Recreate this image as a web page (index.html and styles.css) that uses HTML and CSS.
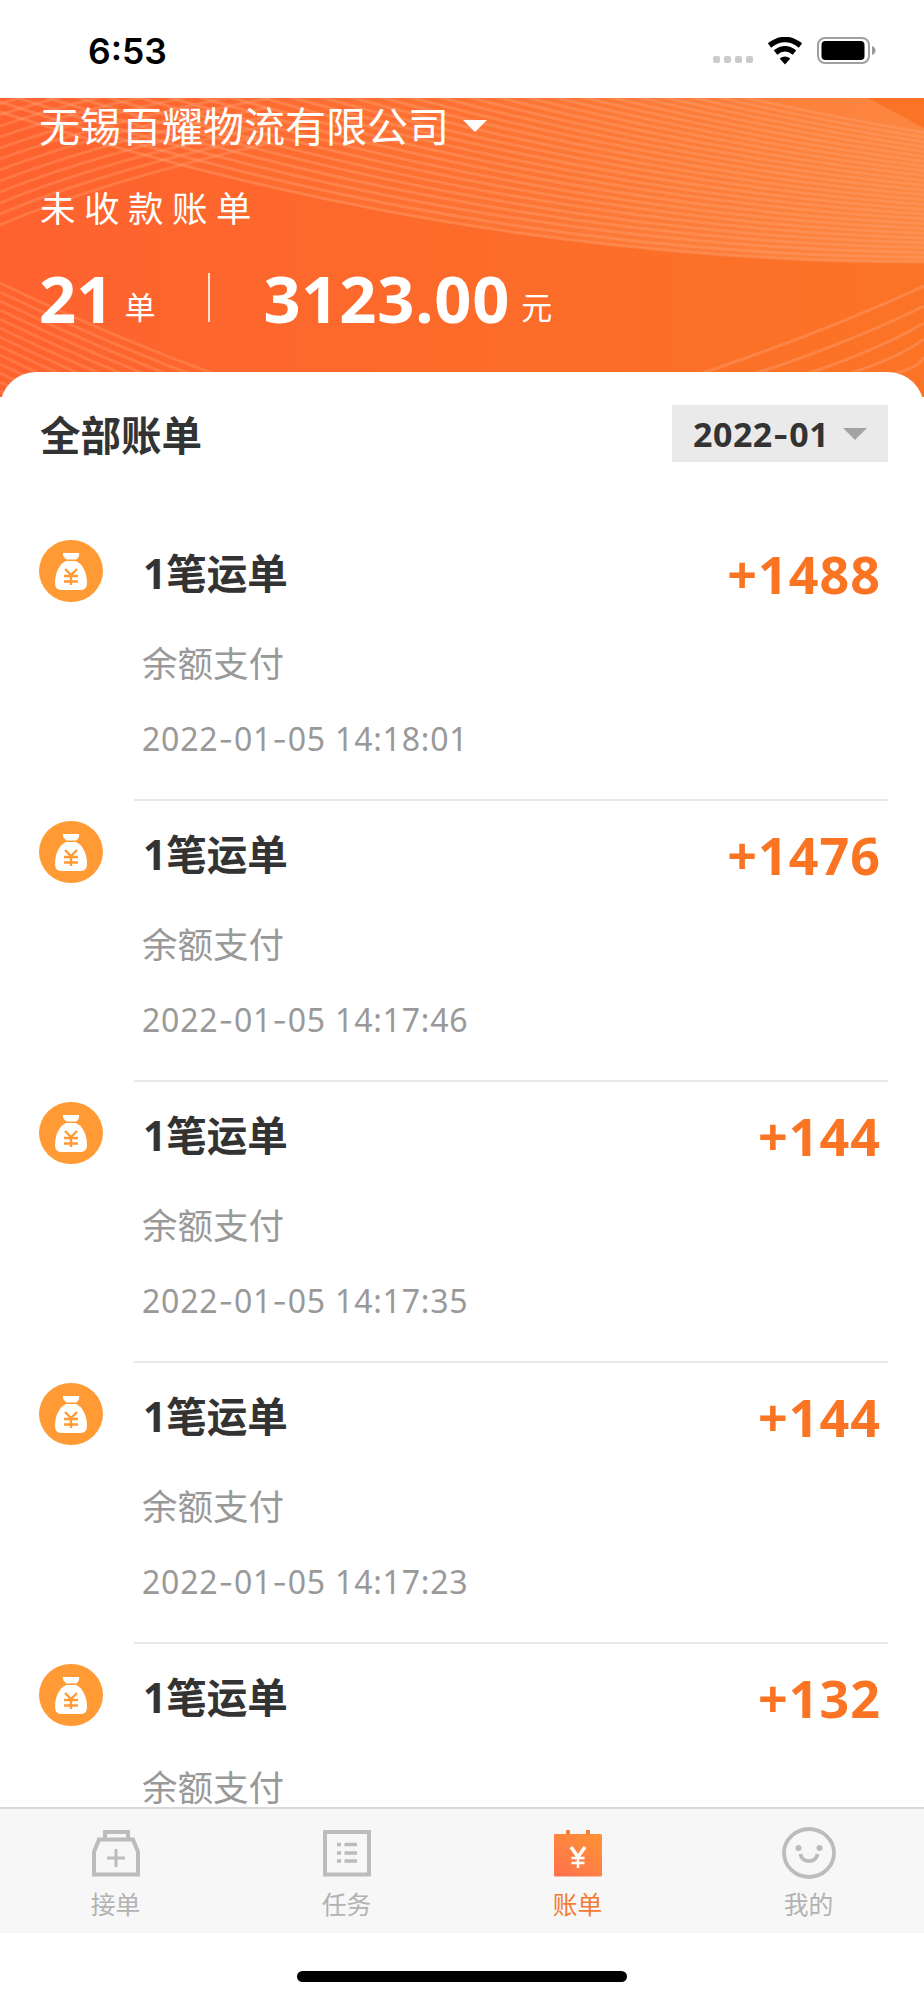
FILE: index.html
```html
<!DOCTYPE html>
<html lang="zh-CN">
<head>
<meta charset="utf-8">
<title>账单</title>
<link rel="stylesheet" href="styles.css">
</head>
<body>
<svg width="0" height="0" class="defs">
  <symbol id="bag" viewBox="0 0 64 62">
    <ellipse cx="32" cy="31" rx="32" ry="31" fill="#ff9a35"/>
    <path d="M24 13H40Q41 16 37.500 19.500H27.500Q23 16 24 13Z" fill="#fff"/>
    <path d="M27 21H37C44 24 48 33 48 43Q48 50 42 50H22Q16 50 16 43C16 33 20 24 27 21Z" fill="#fff"/>
    <path d="M26 29L32 35L38 29M25 36H39M25 41.500H39M32 35V45" fill="none" stroke="#ff9a35" stroke-width="2.400"/>
  </symbol>
</svg>
<div class="phone">
  <div class="status">
    <span class="clock">6:53</span>
    <svg class="status-icons" width="168" height="32" viewBox="0 0 168 32">
      <g fill="#cbcbcb"><rect x="1" y="19" width="7" height="7" rx="2"/><rect x="12" y="19" width="7" height="7" rx="2"/><rect x="23" y="19" width="7" height="7" rx="2"/><rect x="34" y="19" width="7" height="7" rx="2"/></g>
      <g fill="none" stroke="#000" stroke-width="5.500"><path d="M57.500 8.500Q73 -3.500 88.500 8.500"/><path d="M63.500 15.500Q73 8 82.500 15.500"/></g>
      <path d="M67.700 21.500Q73 17.500 78.300 21.500L73 27.500Z"/>
      <rect x="106" y="1" width="51" height="25" rx="7" fill="#fff" stroke="#a0a0a0" stroke-width="2"/>
      <rect x="109.500" y="4" width="43" height="19" rx="4"/>
      <path d="M160 9Q163.500 10.500 163.500 13.500T160 18Z" fill="#999"/>
    </svg>
  </div>

  <header class="hero">
    <svg class="waves" width="924" height="299" viewBox="0 0 924 299">
      <defs>
        <linearGradient id="fan" x1="0" x2="1" y1="0" y2="0"><stop offset="0" stop-color="#ffb27c" stop-opacity="0"/><stop offset=".5" stop-color="#ffb27c" stop-opacity=".1"/><stop offset="1" stop-color="#ffb27c" stop-opacity=".3"/></linearGradient>
      </defs>
      <path d="M0 14C250 95 560 164 924 164V30L868 0H0Z" fill="url(#fan)"/>
      <g id="lines" fill="none" stroke="#ffa070" stroke-opacity=".42" stroke-width="3"></g>
    </svg>
    <div class="company"><span>无锡百耀物流有限公司</span><i class="caret caret-white"></i></div>
    <div class="label">未收款账单</div>
    <div class="totals">
      <b class="count">21</b><span class="unit">单</span>
      <i class="bar"></i>
      <b class="sum">3123.00</b><span class="unit">元</span>
    </div>
  </header>

  <main class="sheet">
    <div class="sheet-head">
      <h2>全部账单</h2>
      <div class="month"><span>2022<span class="dash">-</span>01</span><i class="caret caret-gray"></i></div>
    </div>
    <div class="row"><svg class="bag"><use href="#bag"/></svg><div class="body"><div class="top"><span class="title">1笔运单</span><span class="amount">+1488</span></div><div class="sub">余额支付</div><div class="date">2022<span class="dash">-</span>01<span class="dash">-</span>05 14:18:01</div></div></div>
    <div class="row"><svg class="bag"><use href="#bag"/></svg><div class="body"><div class="top"><span class="title">1笔运单</span><span class="amount">+1476</span></div><div class="sub">余额支付</div><div class="date">2022<span class="dash">-</span>01<span class="dash">-</span>05 14:17:46</div></div></div>
    <div class="row"><svg class="bag"><use href="#bag"/></svg><div class="body"><div class="top"><span class="title">1笔运单</span><span class="amount">+144</span></div><div class="sub">余额支付</div><div class="date">2022<span class="dash">-</span>01<span class="dash">-</span>05 14:17:35</div></div></div>
    <div class="row"><svg class="bag"><use href="#bag"/></svg><div class="body"><div class="top"><span class="title">1笔运单</span><span class="amount">+144</span></div><div class="sub">余额支付</div><div class="date">2022<span class="dash">-</span>01<span class="dash">-</span>05 14:17:23</div></div></div>
    <div class="row last"><svg class="bag"><use href="#bag"/></svg><div class="body"><div class="top"><span class="title">1笔运单</span><span class="amount">+132</span></div><div class="sub">余额支付</div></div></div>
  </main>

  <nav class="tabs">
    <div class="tab">
      <svg width="56" height="56" viewBox="0 0 56 56" fill="none" stroke="#bcbcbc" stroke-width="4"><path d="M6 48.500V26L11 13.500H45L50 26V48.500Z"/><path d="M17 13V6H40V13"/><path d="M28 23V41M19 32H37" stroke-width="3"/></svg>
      <span>接单</span>
    </div>
    <div class="tab">
      <svg width="56" height="56" viewBox="0 0 56 56" fill="none" stroke="#bcbcbc" stroke-width="4"><rect x="6" y="6" width="44" height="42.500"/><path d="M18 18.500H22M25.500 18.500H38M18 27H22M25.500 27H38M18 35H22M25.500 35H38" stroke-width="3.500"/></svg>
      <span>任务</span>
    </div>
    <div class="tab active">
      <svg width="56" height="56" viewBox="0 0 56 56"><defs><linearGradient id="cal" x1="0" y1="1" x2=".8" y2="0"><stop offset="0" stop-color="#ff704f"/><stop offset="1" stop-color="#ff9135"/></linearGradient></defs><path d="M5 8H50.500Q52 8 52 9.500V49Q52 50.500 50.500 50.500H5.500Q4 50.500 4 49V9Q4 8 5 8Z" fill="url(#cal)"/><path d="M18 4V9M38 4V9" stroke="#f5823b" stroke-width="4"/><path d="M21 21L28 31L35 21" fill="none" stroke="#fff" stroke-width="3.500"/><path d="M28 30V42M21.500 32H34.500M21.500 37H34.500" stroke="#fff" stroke-width="2.500"/></svg>
      <span>账单</span>
    </div>
    <div class="tab">
      <svg width="56" height="56" viewBox="0 0 56 56" fill="none" stroke="#bcbcbc" stroke-width="3.800"><ellipse cx="28" cy="27" rx="25" ry="24"/><path d="M19.500 28C20.500 37.500 35.500 37.500 36.500 28"/><circle cx="17.500" cy="22" r="3" fill="#bcbcbc" stroke="none"/><circle cx="38.500" cy="22" r="3" fill="#bcbcbc" stroke="none"/></svg>
      <span>我的</span>
    </div>
  </nav>
  <div class="home"><i></i></div>
</div>
<script src="waves.js"></script>
</body>
</html>
```
FILE: styles.css
```css
* { box-sizing: border-box; }
body { margin: 0; background: #fff; font-family: "Noto Sans", "Noto Sans CJK SC", sans-serif; color: #333; }
.defs { position: absolute; }
.phone { width: 924px; height: 2000px; display: flex; flex-direction: column; overflow: hidden; }

.status { height: 98px; flex: none; display: flex; justify-content: space-between; padding: 30px 44px 0 88px; }
.clock { font: 600 35.500px/44px Inter, sans-serif; color: #000; }
.status-icons { margin-top: 7px; }

.hero { position: relative; flex: none; height: 299px; padding-left: 39px; background: linear-gradient(90deg, #fe622f, #fb7426); color: #fff; }
.waves { position: absolute; left: 0; top: 0; }
.company, .label, .totals { position: relative; display: flex; align-items: center; white-space: nowrap; }
.company { height: 56px; font-size: 41px; gap: 14px; line-height: 56px; }
.company span { margin-top: -1px; }
.caret { width: 0; height: 0; border: 12px solid transparent; border-bottom: 0; }
.caret-white { border-width: 12px 12.500px 0; border-top-color: #fff; margin-top: 0; }
.label { height: 50px; margin-top: 27px; padding-left: 1px; font-size: 35.500px; letter-spacing: 8.500px; }
.totals { height: 70px; margin-top: 32px; align-items: baseline; line-height: 70px; }
.count, .sum { font-size: 65px; font-weight: 700; }
.sum { letter-spacing: .8px; }
.unit { font-size: 31px; line-height: 40px; margin: 0 0 6px 11px; align-self: flex-end; }
.bar { width: 2px; height: 49px; background: rgba(255,255,255,.8); margin: 10px 53px 0 53px; align-self: flex-start; }

.sheet { position: relative; flex: none; height: 1435px; margin-top: -25px; padding: 33px 36px 0 39px; overflow: hidden; background: #fff; border-radius: 36px 36px 0 0; }
.sheet-head { display: flex; justify-content: space-between; align-items: center; height: 57px; margin-bottom: 58px; }
.sheet-head h2 { margin: 0; padding: 3px 0 0 1px; font-size: 40.500px; line-height: 57px; font-weight: 700; }
.month { width: 216px; height: 57px; padding: 0 21px; display: flex; align-items: center; justify-content: space-between; background: #eaeaea; font-size: 34px; line-height: 57px; font-weight: 700; letter-spacing: .5px; }
.month > span { padding-top: 2px; }
.caret-gray { border-top-color: #a3a3a3; }
.dash { font-family: Inter, sans-serif; }

.row { display: flex; height: 281px; }
.bag { flex: none; width: 64px; height: 62px; margin: 20px 31px 0 0; }
.body { flex: 1; padding: 24px 7px 0 8px; border-bottom: 2px solid #e8e8e8; }
.last { height: 166px; }
.last .body { border-bottom: 0; }
.top { display: flex; justify-content: space-between; height: 60px; line-height: 60px; }
.title { padding-left: 1px; font-size: 40.600px; font-weight: 700; }
.amount { font-size: 52px; font-weight: 700; letter-spacing: 1px; color: #fa7424; }
.sub { margin-top: 39px; font-size: 35.500px; line-height: 40px; color: #999; }
.date { margin-top: 36px; font-size: 32px; line-height: 40px; letter-spacing: .8px; color: #999; }

.tabs { position: relative; flex: none; height: 126px; display: grid; grid-template-columns: repeat(4, 1fr); background: #f7f7f7; border-top: 2px solid #d9d9d9; }
.tab { display: flex; flex-direction: column; align-items: center; padding-top: 17px; color: #b2b2b2; font-size: 24.800px; line-height: 36px; }
.tab span { margin-top: 4px; }
.active { color: #f47a32; }
.home { height: 67px; display: flex; justify-content: center; padding-top: 38px; }
.home i { width: 330px; height: 11px; border-radius: 6px; background: #000; }
```
FILE: waves.js
```js
// Line families of the hero's decorative pattern.
const group = document.getElementById('lines');
function line(d, opacity) {
  const p = document.createElementNS('http://www.w3.org/2000/svg', 'path');
  p.setAttribute('d', d);
  if (opacity) p.setAttribute('stroke-opacity', opacity);
  group.appendChild(p);
}
for (let k = 0; k < 28; k++) {
  line(`M0 ${14 - 10 * k}C250 ${95 - 9 * k} 560 ${164 - 7 * k} 924 ${164 - 4.8 * k}`);
}
for (let k = 0; k < 12; k++) {
  line(`M0 ${127 - 11 * k}Q100 ${84 - 10 * k} 270 ${45 - 9 * k}`, 0.36);
}
for (let k = 0; k < 14; k++) {
  line(`M0 ${185 + 9 * k}Q110 ${238 + 9 * k} 225 ${280 + 9 * k}`, 0.34);
}
[[700, 188], [754, 208], [806, 225], [848, 241], [892, 259]].forEach(([x, y]) => {
  line(`M${x} 276Q${(x + 924) / 2 + 12} ${(276 + y) / 2 + 2} 924 ${y}`, 0.42);
});
```
